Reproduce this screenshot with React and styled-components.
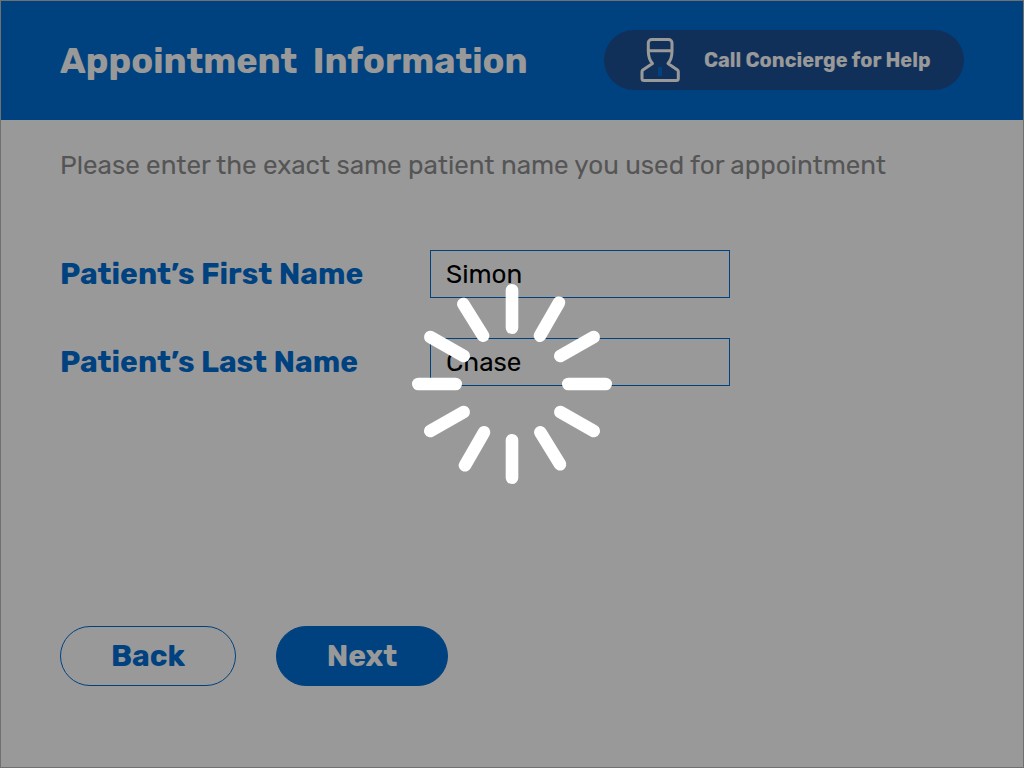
import React from "react";
import styled, { createGlobalStyle } from "styled-components";

const blue = "#006ed5";
const navy = "#1c5096";
const heavy = 740;

const GlobalStyle = createGlobalStyle`
  *, *::before, *::after { box-sizing: border-box; }
  body {
    margin: 0;
    background: #fff;
    font-family: Rubik, Inter, "Liberation Sans", sans-serif;
  }
  button, input { font-family: inherit; }
`;

const Page = styled.div`
  display: flex;
  flex-direction: column;
  min-height: 100vh;
  border: 1px solid #bbb;
`;

const Header = styled.header`
  display: flex;
  align-items: center;
  justify-content: space-between;
  gap: 24px;
  padding: 29px 59px 30px;
  background: ${blue};
`;

const Title = styled.h1`
  margin: 0;
  color: #fff;
  font-size: 36px;
  line-height: 45px;
  font-weight: ${heavy};
  white-space: pre;
`;

const HelpButton = styled.button`
  display: flex;
  align-items: center;
  gap: 24px;
  height: 60px;
  width: 360px;
  padding: 0 0 0 36px;
  border: 0;
  border-radius: 30px;
  background: ${navy};
  color: #fff;
  font-size: 20px;
  font-weight: ${heavy};
  white-space: nowrap;
`;

const Content = styled.main`
  display: flex;
  flex: 1;
  flex-direction: column;
  padding: 30px 59px 81px;
`;

const Hint = styled.p`
  margin: 0;
  color: #8e8e8e;
  font-size: 26px;
  line-height: 32px;
`;

const Form = styled.form`
  display: flex;
  flex: 1;
  flex-direction: column;
  justify-content: space-between;
  gap: 40px;
  padding-top: 68px;
`;

const Fields = styled.div`
  display: grid;
  gap: 40px;
`;

const Field = styled.div`
  display: grid;
  grid-template-columns: 370px 300px;
  align-items: center;
`;

const Label = styled.label`
  color: ${blue};
  font-size: 30px;
  line-height: 36px;
  font-weight: ${heavy};
  white-space: nowrap;
`;

const TextInput = styled.input`
  width: 100%;
  height: 48px;
  padding: 0 15px;
  border: 1px solid ${blue};
  border-radius: 0;
  background: #fff;
  color: #000;
  font-size: 26px;
`;

const Actions = styled.div`
  display: flex;
  gap: 40px;
`;

const ActionButton = styled.button`
  width: ${(p) => (p.$primary ? 172 : 176)}px;
  height: 60px;
  padding: 0;
  border: 1px solid ${blue};
  border-radius: 30px;
  background: ${(p) => (p.$primary ? blue : "#fff")};
  color: ${(p) => (p.$primary ? "#fff" : blue)};
  font-size: 30px;
  font-weight: ${heavy};
`;

const Overlay = styled.div`
  position: fixed;
  inset: 0;
  display: flex;
  align-items: center;
  justify-content: center;
  background: rgba(0, 0, 0, 0.4);
`;

const ConciergeIcon = () => (
  <svg width="40" height="44" viewBox="0 0 40 44" fill="none" aria-hidden="true">
    <rect x="18" y="29" width="4" height="9" fill={blue} />
    <path
      d="M8.300 13V5a3.500 3.500 0 0 1 3.500-3.500h16.700A3.500 3.500 0 0 1 32 5v8c0 5-.4 8.500-4 12.500l9.500 6.500a2 2 0 0 1 .8 1.500v7a2 2 0 0 1-2 2H4a2 2 0 0 1-2-2v-7a2 2 0 0 1 .8-1.500l9.700-6.500C8.900 21.500 8.300 18 8.300 13ZM8.500 12.800H32"
      stroke="#fff"
      strokeWidth="3"
      strokeLinejoin="round"
    />
  </svg>
);

const spokes = [
  [100, 6.3, 100, 43.7],
  [147, 18.7, 128, 51.7],
  [181.7, 53, 148.3, 72],
  [193.7, 100, 156.3, 100],
  [181.7, 147, 148.3, 128],
  [148, 180.3, 128.3, 148.3],
  [100, 193.7, 100, 156.3],
  [53, 181.3, 72, 148.3],
  [18.3, 147, 51.7, 128],
  [6.3, 100, 43.7, 100],
  [18.3, 53, 51.7, 72],
  [51.3, 20, 71, 51.7],
];

const Spinner = () => (
  <svg width="200" height="200" viewBox="0 0 200 200" aria-hidden="true">
    <g stroke="#fff" strokeWidth="12.6" strokeLinecap="round">
      {spokes.map(([x1, y1, x2, y2], i) => (
        <line key={i} x1={x1} y1={y1} x2={x2} y2={y2} />
      ))}
    </g>
  </svg>
);

export default function App() {
  return (
    <>
      <GlobalStyle />
      <Page>
        <Header>
          <Title>{"Appointment  Information"}</Title>
          <HelpButton type="button">
            <ConciergeIcon />
            Call Concierge for Help
          </HelpButton>
        </Header>
        <Content>
          <Hint>Please enter the exact same patient name you used for appointment</Hint>
          <Form onSubmit={(e) => e.preventDefault()}>
            <Fields>
              <Field>
                <Label htmlFor="first-name">Patient’s First Name</Label>
                <TextInput id="first-name" type="text" defaultValue="Simon" />
              </Field>
              <Field>
                <Label htmlFor="last-name">Patient’s Last Name</Label>
                <TextInput id="last-name" type="text" defaultValue="Chase" />
              </Field>
            </Fields>
            <Actions>
              <ActionButton type="button">Back</ActionButton>
              <ActionButton type="submit" $primary>Next</ActionButton>
            </Actions>
          </Form>
        </Content>
      </Page>
      <Overlay role="status">
        <Spinner />
      </Overlay>
    </>
  );
}
